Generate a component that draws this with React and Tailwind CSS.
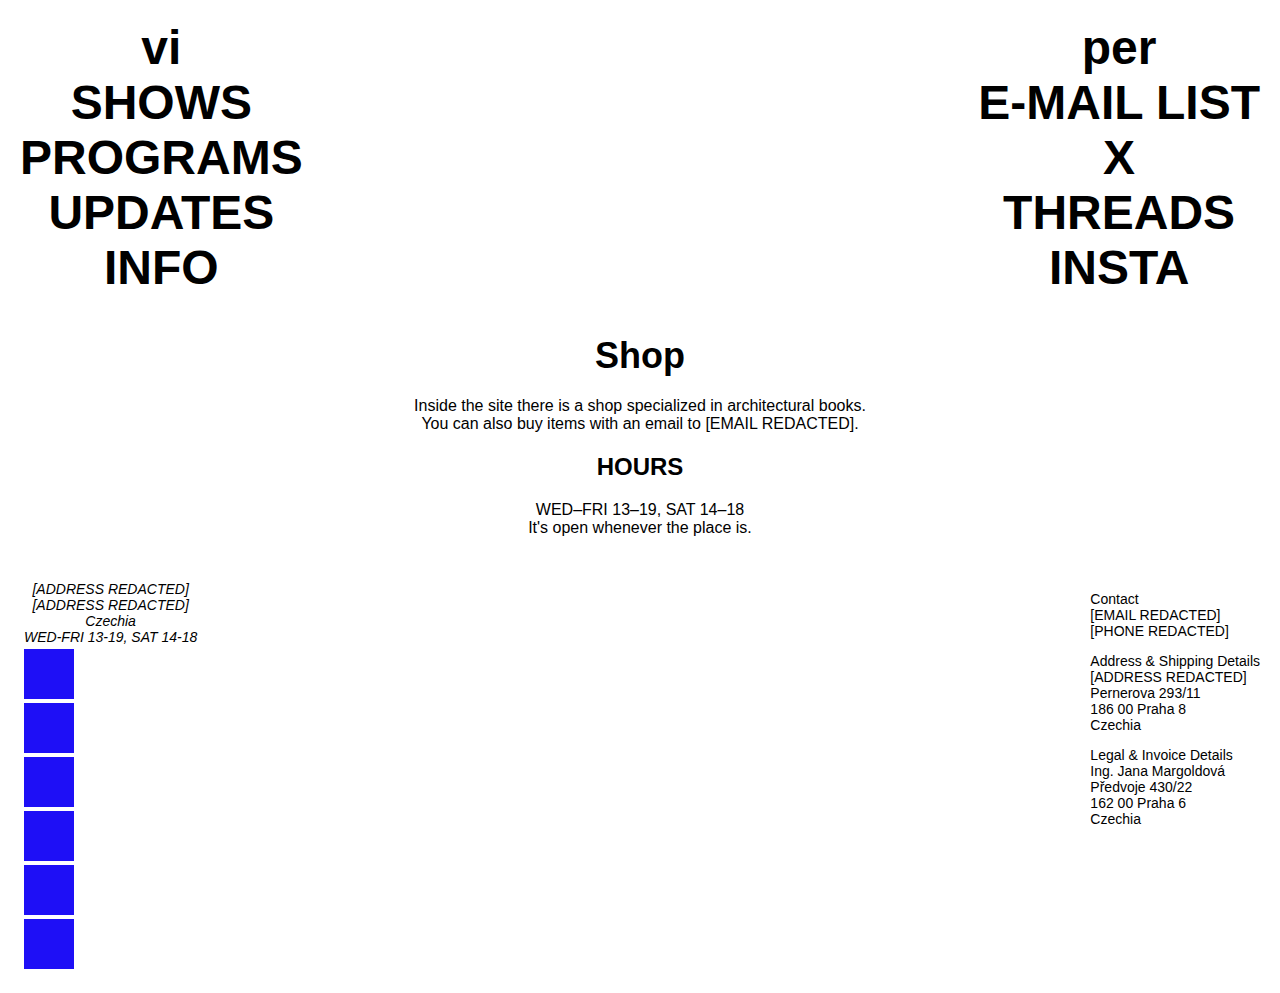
const leftNav = ["vi", "SHOWS", "PROGRAMS", "UPDATES", "INFO"];
const rightNav = ["per", "E-MAIL LIST", "X", "THREADS", "INSTA"];

function Nav({ items }) {
  return (
    <nav className="flex flex-col items-center text-center text-[48px] font-bold leading-[55px] whitespace-nowrap">
      {items.map((item) => (
        <a key={item} href="#" className="text-black">
          {item}
        </a>
      ))}
    </nav>
  );
}

export default function App() {
  return (
    <div className="min-h-screen bg-white text-black font-['Liberation_Sans',Arial,sans-serif]">
      <header className="flex justify-between items-start px-5 pt-5">
        <Nav items={leftNav} />
        <Nav items={rightNav} />
      </header>

      <main className="text-center mt-[40px]">
        <h1 className="text-[36px] font-bold leading-[41px]">Shop</h1>
        <p className="mt-[21px] text-base leading-[18px]">
          Inside the site there is a shop specialized in architectural books.
          <br />
          You can also buy items with an email to [EMAIL REDACTED].
        </p>
        <h2 className="mt-[20px] text-[24px] font-bold leading-[28px]">HOURS</h2>
        <p className="mt-[20px] text-base leading-[18px]">
          WED–FRI 13–19, SAT 14–18
          <br />
          It's open whenever the place is.
        </p>
      </main>

      <footer className="flex justify-between items-start pl-6 pr-5 pb-6 mt-[44px] text-[14px] leading-[16px]">
        <div className="flex flex-col gap-1 w-fit">
          <p className="italic text-center whitespace-nowrap">
            [ADDRESS REDACTED]
            <br />
            [ADDRESS REDACTED]
            <br />
            Czechia
            <br />
            WED-FRI 13-19, SAT 14-18
          </p>
          {[0, 1, 2, 3, 4, 5].map((i) => (
            <a key={i} href="#" className="block w-[50px] h-[50px] bg-[#1e0ff6]" />
          ))}
        </div>

        <div className="mt-[10px] flex flex-col gap-[14px] whitespace-nowrap">
          <p>
            Contact
            <br />
            [EMAIL REDACTED]
            <br />
            [PHONE REDACTED]
          </p>
          <p>
            Address &amp; Shipping Details
            <br />
            [ADDRESS REDACTED]
            <br />
            Pernerova 293/11
            <br />
            186 00 Praha 8
            <br />
            Czechia
          </p>
          <p>
            Legal &amp; Invoice Details
            <br />
            Ing. Jana Margoldová
            <br />
            Předvoje 430/22
            <br />
            162 00 Praha 6
            <br />
            Czechia
          </p>
        </div>
      </footer>
    </div>
  );
}
